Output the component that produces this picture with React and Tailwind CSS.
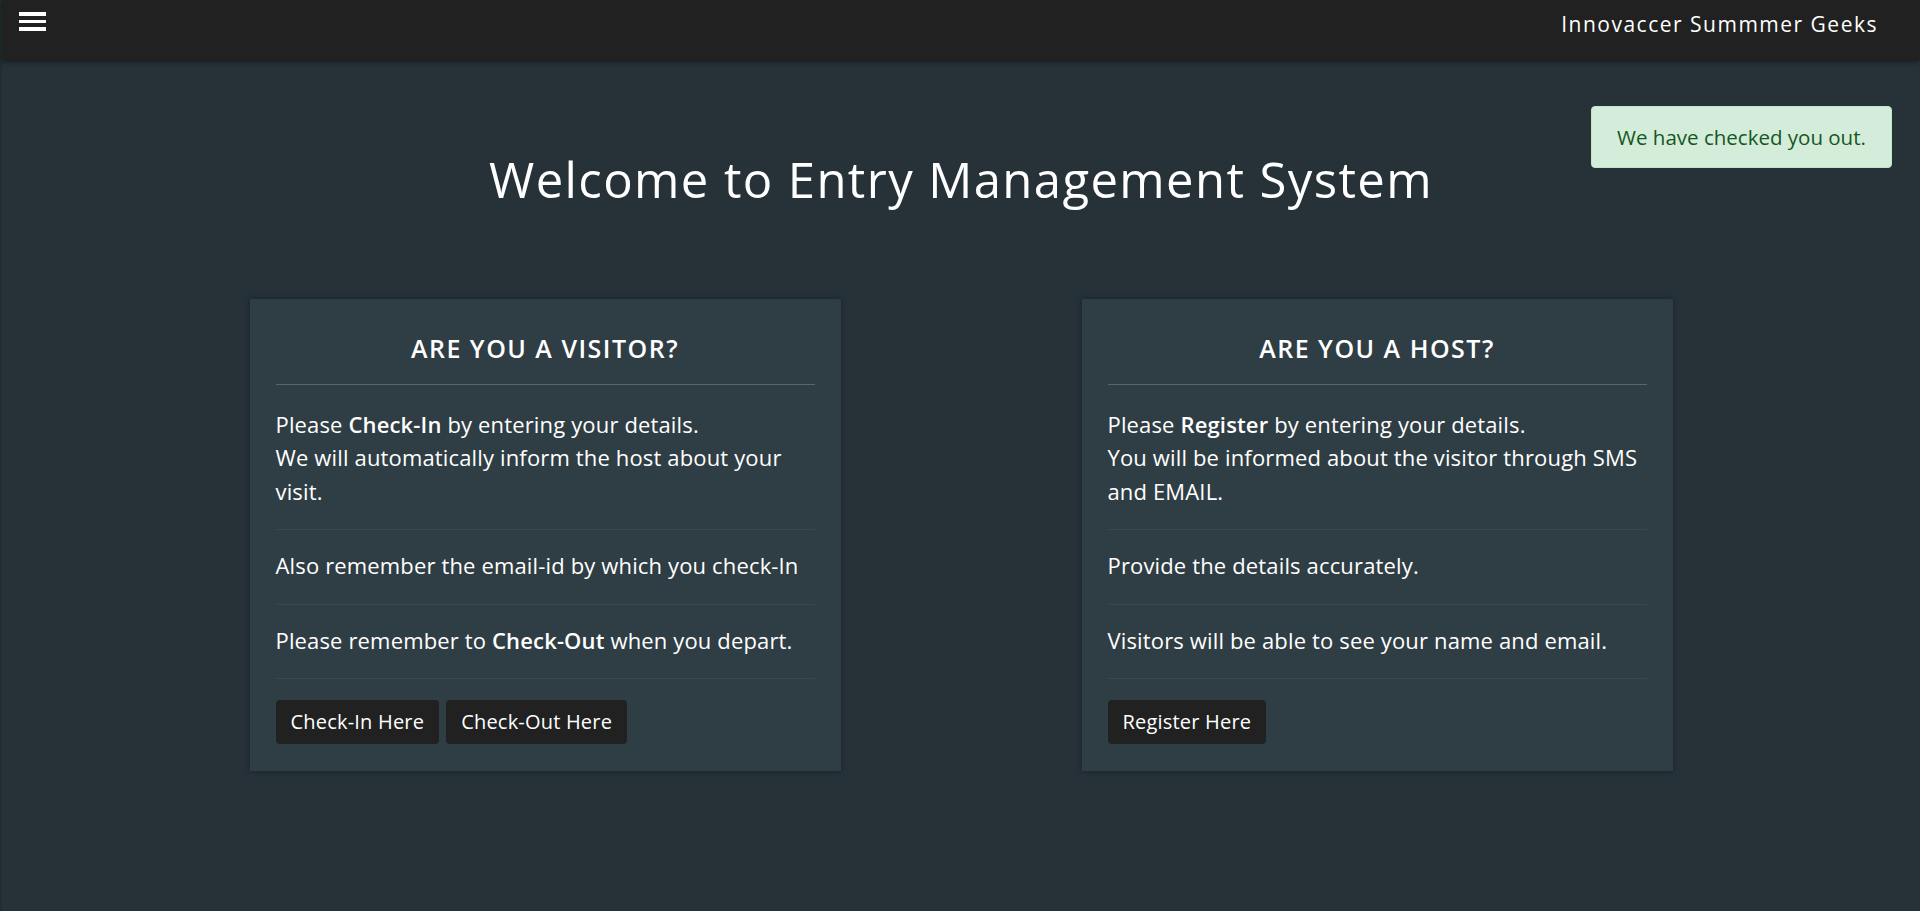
import React from 'react';

const visitorItems = [
  <>
    Please <strong className="font-semibold">Check-In</strong> by entering your details.
    <br />
    We will automatically inform the host about your visit.
  </>,
  <>Also remember the email-id by which you check-In</>,
  <>
    Please remember to <strong className="font-semibold">Check-Out</strong> when you depart.
  </>,
];

const hostItems = [
  <>
    Please <strong className="font-semibold">Register</strong> by entering your details.
    <br />
    You will be informed about the visitor through SMS and EMAIL.
  </>,
  <>Provide the details accurately.</>,
  <>Visitors will be able to see your name and email.</>,
];

const InfoCard = ({ title, items, buttons }) => (
  <div className="w-[591px] bg-[#2f3d44] px-[26px] pt-[34px] pb-[27px] shadow-[0_0_6px_rgba(0,0,0,0.35)]">
    <h4 className="text-center text-[25px] leading-[1.2] font-semibold tracking-[1.5px] text-white">{title}</h4>
    <div className="mt-[21px] h-px bg-[#58656c]" />
    <ul className="mt-[4px]">
      {items.map((item, i) => (
        <li key={i} className="pt-[19px] pb-[21px] border-b border-[#39474e] text-[22px] leading-[33.5px] tracking-[0.15px] text-white">
          {item}
        </li>
      ))}
    </ul>
    <div className="mt-[21px] flex gap-[7px]">
      {buttons.map(label => (
        <button key={label} type="button"
          className="bg-[#212121] text-white text-[20px] leading-[30px] tracking-[0.2px] px-[15px] py-[7px] rounded">
          {label}
        </button>
      ))}
    </div>
  </div>
);

const App = () => {
  return (
    <div className="relative min-h-screen bg-[#263238] border-l-2 border-[#222c31] font-['Open_Sans',sans-serif]">
      <nav className="relative z-10 h-[60px] bg-[#212121] flex items-start justify-between pl-[17px] pr-[42px] pt-[12px] shadow-[0_2px_5px_rgba(0,0,0,0.45)]">
        <button type="button" className="flex flex-col gap-[4px] w-[27px]" aria-label="menu">
          <span className="block h-[3.5px] bg-white" />
          <span className="block h-[3.5px] bg-white" />
          <span className="block h-[3.5px] bg-white" />
        </button>
        <span className="text-white text-[21px] leading-[24px] tracking-[1.5px]">Innovaccer Summmer Geeks</span>
      </nav>

      <div className="absolute top-[106px] right-[28px] w-[301px] h-[62px] flex items-center justify-center rounded bg-[#d4edda] border border-[#c3e6cb] text-[#155724] text-[20.5px]">
        We have checked you out.
      </div>

      <main className="pt-[90px] pb-10">
        <h1 className="text-center text-white text-[49px] leading-[1.2] font-normal tracking-[1.4px]">
          Welcome to Entry Management System
        </h1>
        <div className="mt-[90px] flex justify-center gap-[241px]">
          <InfoCard title="ARE YOU A VISITOR?" items={visitorItems} buttons={['Check-In Here', 'Check-Out Here']} />
          <InfoCard title="ARE YOU A HOST?" items={hostItems} buttons={['Register Here']} />
        </div>
      </main>
    </div>
  );
};

export default App;
